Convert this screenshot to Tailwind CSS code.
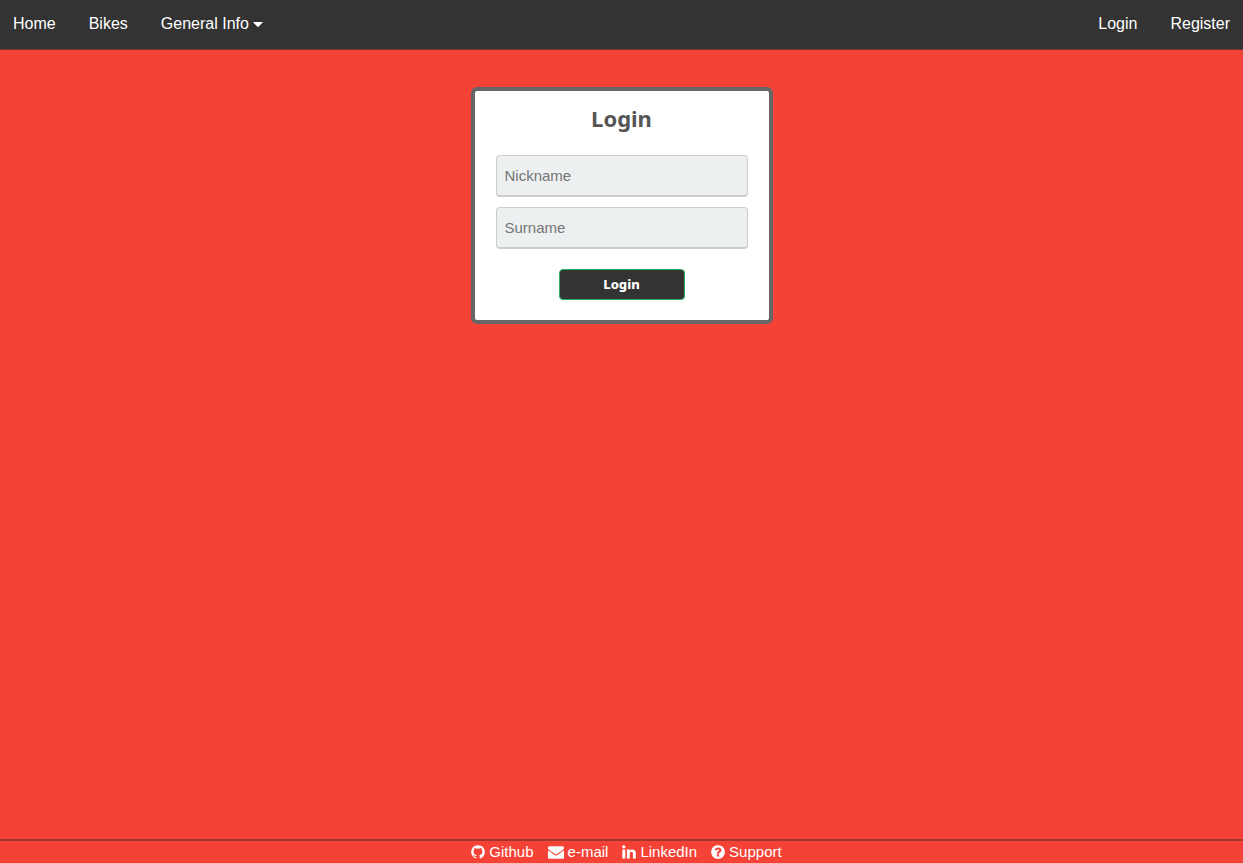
<!DOCTYPE html>
<html lang="en">
<head>
<meta charset="utf-8">
<meta name="viewport" content="width=device-width, initial-scale=1">
<title>Login</title>
<script src="https://cdn.jsdelivr.net/npm/@tailwindcss/browser@4"></script>
</head>
<body class="flex min-h-screen flex-col border-b border-[#fbb9b4] bg-[#f44336] font-['Liberation_Sans',Arial,sans-serif] text-white">
<nav class="flex justify-between border-b border-[#6e3733] bg-[#333333] px-[13px] pt-3 pb-[13px] text-base leading-6">
  <div class="flex gap-[33px]">
    <a href="#">Home</a>
    <a href="#">Bikes</a>
    <button type="button" class="flex items-center gap-1">General Info
      <svg class="h-[5px] w-[10px]" viewBox="0 0 10 5" fill="currentColor" aria-hidden="true"><path d="M.6 0h8.8q.6 0 .3.6L5.5 4.8q-.5.4-1 0L.3.6Q0 0 .6 0z"/></svg>
    </button>
  </div>
  <div class="flex gap-[33px]">
    <a href="#">Login</a>
    <a href="#">Register</a>
  </div>
</nav>
<main class="flex-1 px-4 pt-[37px]">
  <form class="mx-auto flex w-[302px] flex-col items-center rounded-md border-4 border-[#666666] bg-white px-[21px] pt-[11px] pb-5">
    <h1 class="mb-[21px] font-['Noto_Sans',sans-serif] text-[22px] leading-8 font-bold text-[#555555]">Login</h1>
    <input type="text" aria-label="Nickname" placeholder="Nickname" class="mb-[10px] h-[42px] w-full rounded border border-b-2 border-[#cccccc] bg-[#ecf0f1] px-2 text-[15px] text-[#333333] placeholder:text-[#757575]">
    <input type="text" aria-label="Surname" placeholder="Surname" class="mb-5 h-[42px] w-full rounded border border-b-2 border-[#cccccc] bg-[#ecf0f1] px-2 text-[15px] text-[#333333] placeholder:text-[#757575]">
    <button type="submit" class="h-[31px] w-1/2 rounded border border-[#27ae60] bg-[#333333] font-['Noto_Sans',sans-serif] text-[13px] font-extrabold">Login</button>
  </form>
</main>
<footer class="flex justify-center gap-[14px] border-t-2 border-[#a43630] pl-[10px] text-[15px] leading-[22px]">
  <a href="#" class="flex items-center gap-1"><svg class="h-[16px] w-[14px]" viewBox="128 0 1536 1792" fill="currentColor" aria-hidden="true"><path d="M896 128q209 0 385.5 103t279.5 279.5 103 385.5q0 251-146.5 451.5t-378.5 277.5q-27 5-40-7t-13-30q0-3 .5-76.5t.5-134.5q0-97-52-142 57-6 102.5-18t94-39 81-66.5 53-105 20.5-150.5q0-119-79-206 37-91-8-204-28-9-81 11t-92 44l-38 24q-93-26-192-26t-192 26q-16-11-42.5-27t-83.5-38.5-85-13.5q-45 113-8 204-79 87-79 206 0 85 20.5 150t52.5 105 80.5 67 94 39 102.5 18q-39 36-49 103-21 10-45 15t-57 5-65.5-21.5-55.5-62.5q-19-32-48.5-52t-49.5-24l-20-3q-21 0-29 4.5t-5 11.5 9 14 13 12l7 5q22 10 43.5 38t31.5 51l10 23q13 38 44 61.5t67 30 69.5 7 55.5-3.5l23-4q0 38 .5 88.5t.5 54.5q0 18-13 30t-40 7q-232-77-378.5-277.5t-146.5-451.5q0-209 103-385.5t279.5-279.5 385.5-103z"/></svg>Github</a>
  <a href="#" class="flex items-center gap-1"><svg class="h-[16px] w-[16px]" viewBox="0 0 1792 1792" fill="currentColor" aria-hidden="true"><path d="M1792 710v794q0 66-47 113t-113 47h-1472q-66 0-113-47t-47-113v-794q44 49 101 87 362 246 497 345 57 42 92.5 65.5t94.5 48 110 24.5h2q51 0 110-24.5t94.5-48 92.5-65.5q170-123 498-345 57-39 100-87zm0-294q0 79-49 151t-122 123q-376 261-468 325-10 7-42.5 30.5t-54 38-52 32.5-57.5 27-50 9h-2q-23 0-50-9t-57.5-27-52-32.5-54-38-42.5-30.5q-91-64-262-182.5t-205-142.5q-62-42-117-115.5t-55-136.5q0-78 41.5-130t118.5-52h1472q65 0 112.5 47t47.5 113z"/></svg>e-mail</a>
  <a href="#" class="flex items-center gap-1"><svg class="h-[16px] w-[14px]" viewBox="128 0 1536 1792" fill="currentColor" aria-hidden="true"><path d="M477 625v991h-330v-991h330zm21-306q1 73-50.5 122t-135.5 49h-2q-82 0-132-49t-50-122q0-74 51.5-122.5t134.5-48.5 133 48.5 51 122.5zm1166 729v568h-329v-530q0-105-40.5-164.5t-126.5-59.5q-63 0-105.5 34.5t-63.5 85.5q-11 30-11 81v553h-329q2-399 2-647t-1-296l-1-48h329v144h-2q20-32 41-56t56.5-52 87-43.5 114.5-15.5q171 0 275 113.5t104 332.5z"/></svg>LinkedIn</a>
  <a href="#" class="flex items-center gap-1"><svg class="h-[16px] w-[14px]" viewBox="128 0 1536 1792" fill="currentColor" aria-hidden="true"><path d="M1024 1376v-192q0-14-9-23t-23-9h-192q-14 0-23 9t-9 23v192q0 14 9 23t23 9h192q14 0 23-9t9-23zm256-672q0-88-55.5-163t-138.5-116-170-41q-243 0-371 213-15 24 8 42l132 100q7 6 19 6 16 0 25-12 53-68 86-92 34-24 86-24 48 0 85.5 26t37.5 59q0 38-20 61t-68 45q-63 28-115.5 86.5t-52.5 125.5v36q0 14 9 23t23 9h192q14 0 23-9t9-23q0-19 21.5-49.5t54.5-49.5q32-18 49-28.5t46-35 44.5-48 28-60.5 12.5-81zm384 192q0 209-103 385.5t-279.5 279.5-385.5 103-385.5-103-279.5-279.5-103-385.5 103-385.5 279.5-279.5 385.5-103 385.5 103 279.5 279.5 103 385.5z"/></svg>Support</a>
</footer>
</body>
</html>
